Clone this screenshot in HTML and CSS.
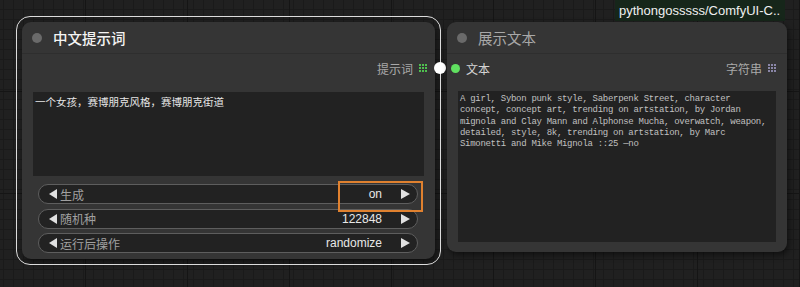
FILE: index.html
```html
<!DOCTYPE html>
<html>
  <head>
    <meta charset="utf-8" />
    <title>ComfyUI</title>
    <link rel="stylesheet" href="styles.css">
  </head>
  <body>
    <div class="canvas">
      <div class="badge">pythongosssss/ComfyUI-C..</div>

      <!-- 中文提示词 节点 -->
      <div class="node node-prompt selected">
        <div class="node-title">
          <span class="title-dot"></span>
          <span class="title-text">中文提示词</span>
        </div>
        <div class="node-body">
          <div class="slot-row out">
            <span class="slot-label">提示词</span>
            <span class="grid-icon green"></span>
          </div>
          <div class="textbox cn">一个女孩，赛博朋克风格，赛博朋克街道</div>
          <div class="widgets">
            <div class="widget">
              <span class="arr left"></span>
              <span class="w-label">生成</span>
              <span class="w-value">on</span>
              <span class="arr right"></span>
            </div>
            <div class="widget">
              <span class="arr left"></span>
              <span class="w-label">随机种</span>
              <span class="w-value">122848</span>
              <span class="arr right"></span>
            </div>
            <div class="widget">
              <span class="arr left"></span>
              <span class="w-label">运行后操作</span>
              <span class="w-value">randomize</span>
              <span class="arr right"></span>
            </div>
          </div>
        </div>
        <span class="out-dot"></span>
        <span class="highlight"></span>
      </div>

      <!-- 展示文本 节点 -->
      <div class="node node-show">
        <div class="node-title">
          <span class="title-dot"></span>
          <span class="title-text dim">展示文本</span>
        </div>
        <div class="node-body">
          <div class="slot-row in">
            <span class="in-dot"></span>
            <span class="slot-label light">文本</span>
            <span class="spacer"></span>
            <span class="slot-label">字符串</span>
            <span class="grid-icon purple"></span>
          </div>
          <div class="textbox mono">A girl, Sybon punk style, Saberpenk Street, character
concept, concept art, trending on artstation, by Jordan
mignola and Clay Mann and Alphonse Mucha, overwatch, weapon,
detailed, style, 8k, trending on artstation, by Marc
Simonetti and Mike Mignola ::25 —no</div>
        </div>
      </div>
    </div>
  </body>
</html>
```

FILE: styles.css
```css
html,
body {
  margin: 0;
  padding: 0;
  width: 800px;
  height: 287px;
  overflow: hidden;
  font-family: "Liberation Sans", "Noto Sans CJK SC", sans-serif;
}
.canvas {
  position: relative;
  width: 800px;
  height: 287px;
  background-color: #202020;
  background-image: linear-gradient(90deg, #151515 1px, transparent 1px),
    linear-gradient(0deg, #151515 1px, transparent 1px),
    linear-gradient(90deg, #1a1a1a 1px, transparent 1px),
    linear-gradient(0deg, #1a1a1a 1px, transparent 1px);
  background-size: 102px 102px, 102px 102px, 10px 10px, 10px 10px;
  background-position: -17px -10px;
}
.badge {
  position: absolute;
  left: 615px;
  top: 0;
  width: 170px;
  height: 21px;
  line-height: 21px;
  padding-left: 4px;
  box-sizing: border-box;
  background: #16261a;
  color: #f0f0f0;
  font-size: 13px;
  white-space: nowrap;
}
.node {
  position: absolute;
  background: #353535;
  border-radius: 9px;
  box-shadow: 2px 3px 6px rgba(0, 0, 0, 0.5);
  display: flex;
  flex-direction: column;
}
.node > * {
  flex-shrink: 0;
}
.node-prompt {
  left: 22px;
  top: 22px;
  width: 413px;
  height: 237px;
}
.node-show {
  left: 447px;
  top: 22px;
  width: 340px;
  height: 230px;
}
.selected::before {
  content: "";
  position: absolute;
  left: -6px;
  top: -6px;
  right: -6px;
  bottom: -6px;
  border: 1.5px solid #dcdcdc;
  border-radius: 14px;
}
.node-title {
  height: 32px;
  display: flex;
  align-items: center;
  border-bottom: 1px solid #2e2e2e;
  box-sizing: border-box;
}
.title-dot {
  width: 10px;
  height: 10px;
  border-radius: 50%;
  background: #6a6a6a;
  margin-left: 10px;
  margin-right: 11px;
}
.title-text {
  font-size: 14.5px;
  font-weight: 500;
  color: #f4f4f4;
}
.title-text.dim {
  color: #a8a8a8;
  font-weight: normal;
}
.node-body {
  flex: 1;
  display: flex;
  flex-direction: column;
  padding: 0 11px 5px 11px;
}
.node-body > * {
  flex-shrink: 0;
}
.slot-row {
  height: 28px;
  display: flex;
  align-items: center;
  font-size: 12px;
}
.slot-row.out {
  justify-content: flex-end;
}
.slot-label {
  color: #a9a9a9;
}
.slot-label.light {
  color: #d4d4d4;
}
.spacer {
  flex: 1;
}
.grid-icon {
  width: 8px;
  height: 8px;
  margin-left: 6px;
  margin-right: -3px;
  background-image: linear-gradient(90deg, transparent 2px, #353535 2px, #353535 3px, transparent 3px, transparent 5px, #353535 5px, #353535 6px, transparent 6px),
    linear-gradient(0deg, transparent 2px, #353535 2px, #353535 3px, transparent 3px, transparent 5px, #353535 5px, #353535 6px, transparent 6px);
}
.grid-icon.green {
  background-color: #4fbf4f;
}
.grid-icon.purple {
  background-color: #8a86a8;
  margin-right: 0;
}
.in-dot {
  width: 9px;
  height: 9px;
  border-radius: 50%;
  background: #60e060;
  margin-left: -7px;
  margin-right: 6px;
}
.out-dot {
  position: absolute;
  left: 412px;
  top: 40px;
  width: 12px;
  height: 12px;
  border-radius: 50%;
  background: #ffffff;
}
.textbox {
  background: #222222;
  box-sizing: border-box;
}
.textbox.cn {
  height: 84px;
  margin-top: 10px;
  padding: 3px 2px;
  font-size: 10.5px;
  line-height: 14px;
  color: #e6e6e6;
}
.node-show .node-body {
  padding-bottom: 10px;
}
.textbox.mono {
  flex: 1;
  margin-top: 9px;
  padding: 3px 2px;
  font-family: "Liberation Mono", "DejaVu Sans Mono", monospace;
  font-size: 9px;
  letter-spacing: -0.3px;
  line-height: 11.3px;
  color: #c0c0c0;
  white-space: pre;
}
.widgets {
  display: flex;
  flex-direction: column;
  gap: 4.5px;
  margin-top: 8px;
  padding: 0 6px 0 5px;
}
.widget {
  height: 20px;
  box-sizing: border-box;
  border: 1px solid #5e5e5e;
  border-radius: 10px;
  background: #222222;
  display: flex;
  align-items: center;
  padding: 0 7px 0 10px;
  font-size: 12px;
}
.arr {
  width: 0;
  height: 0;
  border-top: 5px solid transparent;
  border-bottom: 5px solid transparent;
}
.arr.left {
  border-right: 8px solid #e0e0e0;
  margin-right: 3px;
}
.arr.right {
  border-left: 9px solid #e0e0e0;
  margin-left: 19px;
}
.w-label {
  flex: 1;
  color: #a0a0a0;
}
.w-value {
  color: #e8e8e8;
}
.highlight {
  position: absolute;
  left: 316px;
  top: 159px;
  width: 85px;
  height: 31px;
  box-sizing: border-box;
  border: 2px solid #e0812f;
}
```
